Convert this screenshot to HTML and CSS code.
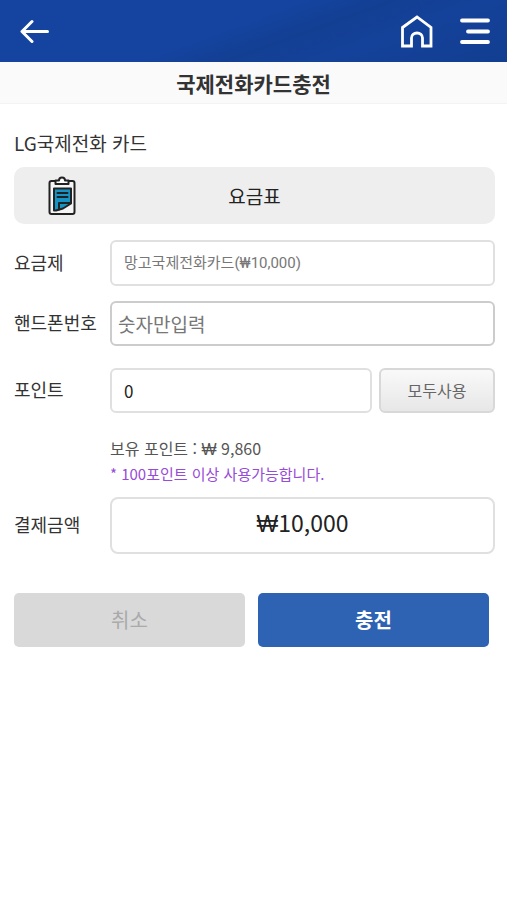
FILE: index.html
```html
<!DOCTYPE html>
<html lang="ko">
<head>
<meta charset="utf-8">
<meta name="viewport" content="width=device-width, initial-scale=1">
<title>국제전화카드충전</title>
<link rel="stylesheet" href="styles.css">
</head>
<body>
<header class="topbar">
  <button class="icon-button" type="button" aria-label="뒤로">
    <svg width="30" height="26" viewBox="0 0 30 26" fill="none" stroke="#fff" stroke-width="3" stroke-linecap="round" stroke-linejoin="round"><path d="M27.500 13.500H3M12 3.500l-10 10 10 10"/></svg>
  </button>
  <nav class="topbar-actions">
    <a class="icon-button" href="#" aria-label="홈">
      <svg width="32" height="34" viewBox="0 0 32 34" fill="none" stroke="#fff" stroke-width="2.800"><path d="M1.500 13.500L16 3l14 10.500V32H21.500V24c0-3-2.500-5-5.500-5s-5.500 2-5.500 5v8H1.500z"/></svg>
    </a>
    <button class="icon-button" type="button" aria-label="메뉴">
      <svg width="30" height="28" viewBox="0 0 30 28" fill="none" stroke="#fff" stroke-width="3.800" stroke-linecap="round"><path d="M2 3.500h26M8 14.500h20M2 25h26"/></svg>
    </button>
  </nav>
</header>
<h1 class="page-title">국제전화카드충전</h1>
<main class="content">
  <h2 class="card-name">LG국제전화 카드</h2>
  <a class="rates" href="#">
    <svg class="rates-icon" width="28" height="40" viewBox="0 0 28 40" stroke="#222" stroke-width="2" stroke-linejoin="round" stroke-linecap="round">
      <rect x="1.500" y="5" width="25" height="33" rx="2" fill="#f5f5f5"/>
      <path d="M7.500 8V4.500H11C11 .5 17 .5 17 4.500h3.500V8z" fill="#fff"/>
      <path d="M6 12.500h17v15L15 32.500 8 34.500H6z" fill="#1495c5"/>
      <path d="M9.500 17h10M9.500 21h10M11 33.500v-6.500H22" fill="none"/>
    </svg>
    <span>요금표</span>
  </a>
  <form class="form">
    <label for="plan">요금제</label>
    <select class="field plan" id="plan"><option>망고국제전화카드(₩10,000)</option></select>

    <label for="phone">핸드폰번호</label>
    <input class="field phone" id="phone" type="tel" placeholder="숫자만입력">

    <label class="point-label" for="point">포인트</label>
    <div class="point-row">
      <input class="field point" id="point" type="text" inputmode="numeric" value="0">
      <button class="use-all" type="button">모두사용</button>
    </div>

    <div class="notes">
      <p>보유 포인트 : <span class="won">₩</span> 9,860</p>
      <p class="hint">* 100포인트 이상 사용가능합니다.</p>
    </div>

    <label for="amount">결제금액</label>
    <output class="field amount" id="amount"><span class="won">₩</span>10,000</output>

    <div class="actions">
      <button class="action cancel" type="button">취소</button>
      <button class="action submit" type="button">충전</button>
    </div>
  </form>
</main>
</body>
</html>
```
FILE: styles.css
```css
* {
  box-sizing: border-box;
}

body {
  margin: 0;
  background: #fff;
  color: #333;
  font: 18px/24px "Noto Sans CJK KR", sans-serif;
}

button,
input,
select {
  font: inherit;
}

h1,
h2,
p {
  margin: 0;
}

.topbar {
  display: flex;
  align-items: center;
  justify-content: space-between;
  height: 62px;
  padding: 0 17px 0 20px;
  background: linear-gradient(160deg, #1444a0 0%, #1444a0 45%, #133f93 58%, #14429a 72%, #123e90 100%);
}

.topbar-actions {
  display: flex;
  align-items: center;
  gap: 27px;
}

.icon-button {
  display: block;
  padding: 0;
  border: 0;
  background: none;
}

.icon-button svg {
  display: block;
}

.page-title {
  height: 42px;
  border-bottom: 1px solid #f3f3f3;
  background: #fafafa;
  font-size: 21px;
  line-height: 42px;
  font-weight: 700;
  text-align: center;
}

.content {
  padding: 27px 12px 0 14px;
}

.card-name {
  font-size: 19px;
  line-height: 24px;
  font-weight: 400;
}

.rates {
  position: relative;
  display: flex;
  align-items: center;
  justify-content: center;
  height: 57px;
  margin-top: 12px;
  border-radius: 10px;
  background: #eee;
  color: #222;
  font-size: 19px;
  text-decoration: none;
}

.rates-icon {
  position: absolute;
  left: 34px;
}

.form {
  display: grid;
  grid-template-columns: 84px 1fr;
  column-gap: 12px;
  align-items: center;
  margin-top: 16px;
}

.form label {
  padding-bottom: 3px;
  white-space: nowrap;
}

.field {
  display: block;
  width: 100%;
  min-width: 0;
  margin: 0;
  border: 2px solid #e0e0e0;
  border-radius: 6px;
  background: #fff;
}

.plan {
  height: 46px;
  padding: 0 12px;
  appearance: none;
  color: #777;
  font-family: Roboto, "Noto Sans CJK KR", sans-serif;
  font-size: 15px;
}

.phone {
  height: 45px;
  margin-top: 15px;
  padding: 0 6px;
  border-color: #ccc;
  font-size: 19px;
}

.form label[for="phone"] {
  margin-top: 15px;
}

.phone::placeholder {
  color: #777;
}

.point-label,
.point-row {
  margin-top: 22px;
}

.point-row {
  display: grid;
  grid-template-columns: 1fr 116px;
  gap: 7px;
}

.point {
  height: 45px;
  padding: 0 12px;
  color: #222;
  font-size: 17px;
}

.use-all {
  height: 45px;
  padding: 0 0 2px;
  border: 2px solid #d8d8d8;
  border-radius: 6px;
  background: linear-gradient(#f9f9f9, #e7e7e7);
  color: #666;
  font-size: 16px;
  line-height: 24px;
}

.notes {
  grid-column: 2;
  margin: 22px 0 11px;
  color: #555;
  font-size: 16px;
  line-height: 26px;
}

.notes .hint {
  color: #984ad8;
  font-size: 15px;
  line-height: 25px;
}

.won {
  font-family: "Liberation Sans", sans-serif;
  line-height: 1;
}

.amount {
  height: 57px;
  border-radius: 8px;
  color: #222;
  font-size: 23px;
  line-height: 46px;
  text-align: center;
}

.actions {
  grid-column: 1 / -1;
  display: grid;
  grid-template-columns: 1fr 1fr;
  gap: 13px;
  margin: 39px 6px 0 0;
}

.action {
  height: 54px;
  padding: 0;
  border: 0;
  border-radius: 5px;
  font-size: 20px;
}

.cancel {
  background: #d9d9d9;
  color: #aaa;
}

.submit {
  background: #2e62b2;
  color: #fff;
  font-weight: 700;
}
```
